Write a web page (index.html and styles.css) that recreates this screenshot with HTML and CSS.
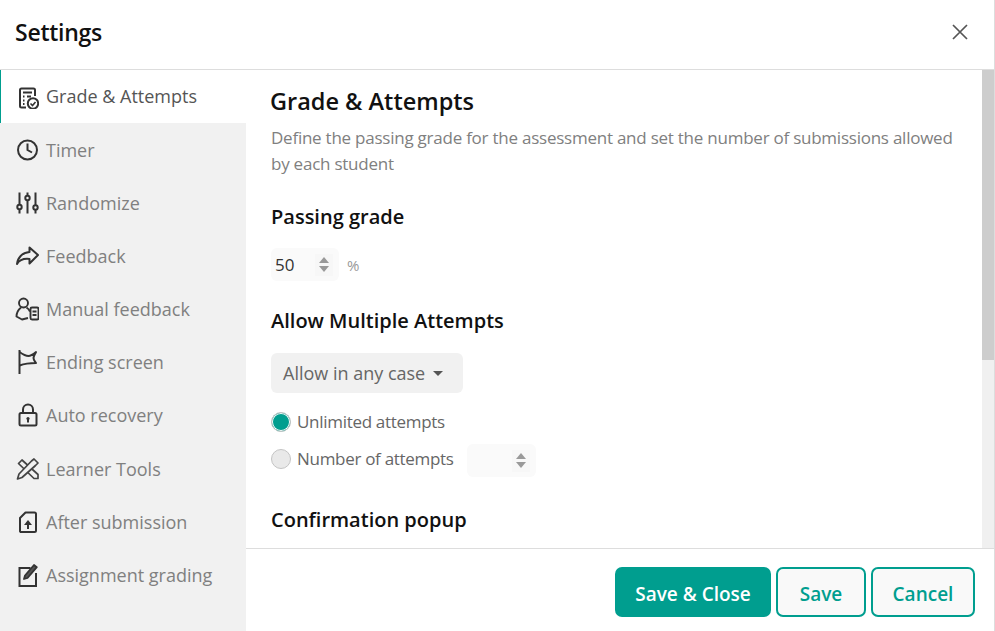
FILE: index.html
```html
<!DOCTYPE html>
<html lang="en">

<head>
    <meta charset="UTF-8" />
    <title>Settings</title>
    <link rel="stylesheet" href="styles.css">
</head>

<body>
    <div class="dialog">
        <header class="dialog-header">
            <h1>Settings</h1>
            <button class="close-btn" aria-label="Close">
                <svg width="16" height="16" viewBox="0 0 16 16"><path d="M1 1l14 14M15 1L1 15" stroke="#555" stroke-width="1.7" fill="none" /></svg>
            </button>
        </header>

        <div class="dialog-body">
            <nav class="side-nav">
                <a class="nav-item active">
                    <svg class="nav-icon" viewBox="0 0 24 24" fill="none" stroke="#333" stroke-width="2">
                        <path d="M11 22.500H6.500A1.500 1.500 0 0 1 5 21V5A1.500 1.500 0 0 1 6.500 3.500h12A1.500 1.500 0 0 1 20 5v6" />
                        <path d="M8 7.500h9M8 11.500h1.500M12 11.500h4M8 15.500h1.500M8 19h1.500" stroke-width="1.800" />
                        <circle cx="18" cy="18.500" r="5.200" fill="#fff" />
                        <path d="M15.500 18.500l2 2 3-3.500" stroke-width="1.600" />
                    </svg>
                    <span>Grade &amp; Attempts</span>
                </a>
                <a class="nav-item">
                    <svg class="nav-icon" viewBox="0 0 24 24" fill="none" stroke="#333" stroke-width="2">
                        <circle cx="12.500" cy="12" r="9.500" />
                        <path d="M12.500 5.500V12l4.500 2.500" />
                    </svg>
                    <span>Timer</span>
                </a>
                <a class="nav-item">
                    <svg class="nav-icon" viewBox="0 0 24 24" fill="none" stroke="#333" stroke-width="2">
                        <path d="M4.500 1.500v12M4.500 18.500v4M12.500 1.500v3M12.500 9.500v13M20.500 1.500v12.500M20.500 19v3.500" />
                        <circle cx="4.500" cy="16" r="2.200" />
                        <circle cx="12.500" cy="7" r="2.200" />
                        <circle cx="20.500" cy="16.500" r="2.200" />
                    </svg>
                    <span>Randomize</span>
                </a>
                <a class="nav-item">
                    <svg class="nav-icon" viewBox="0 0 24 24" fill="none" stroke="#333" stroke-width="2" stroke-linejoin="round">
                        <path d="M14.500 3.500L23 11l-8.500 8.500v-4.500C10 14.500 5 15 2 20c.5-6 5-11.500 12.500-12z" />
                    </svg>
                    <span>Feedback</span>
                </a>
                <a class="nav-item">
                    <svg class="nav-icon" viewBox="0 0 24 24" fill="none" stroke="#333" stroke-width="1.900" stroke-linejoin="round">
                        <circle cx="8.500" cy="6" r="4.500" />
                        <path d="M6 10.500C3 13 1.500 16 1.500 19.500L7 22.500l6-1.500" />
                        <path d="M11.500 10.500c1.500 1 2.800 2.500 3.500 4" />
                        <rect x="15.500" y="10.500" width="8" height="12" rx="1.500" />
                        <path d="M17.500 14.500h4M17.500 18h4" />
                    </svg>
                    <span>Manual feedback</span>
                </a>
                <a class="nav-item">
                    <svg class="nav-icon" viewBox="0 0 24 24" fill="none" stroke="#333" stroke-width="2">
                        <path d="M4.500 0v24" />
                        <path d="M4.500 2c3.500 2.500 6.500 4 9 4s5-2 7.500-4c-1 2-2.500 4-2.500 6s1.500 3.500 2.500 5c-5.500 0-11 .5-16.500 2.500" stroke-linejoin="round" />
                    </svg>
                    <span>Ending screen</span>
                </a>
                <a class="nav-item">
                    <svg class="nav-icon" viewBox="0 0 24 24" fill="none" stroke="#333" stroke-width="2">
                        <rect x="4.500" y="10" width="17" height="12.500" rx="1.500" />
                        <path d="M8 10V6.500a5 5 0 0 1 10 0V10" />
                        <path d="M13 16v3.500" />
                        <circle cx="13" cy="15.500" r="1.600" fill="#333" stroke="none" />
                    </svg>
                    <span>Auto recovery</span>
                </a>
                <a class="nav-item">
                    <svg class="nav-icon" viewBox="0 0 24 24" fill="none" stroke="#444" stroke-width="1.700" stroke-linejoin="round">
                        <path d="M3.500 6.500L7 3l16 14.500V21.500h-4z" />
                        <path d="M16.500 4l2.500-2 4 4-2.500 2.500L7 20.500 2.500 22l1.500-5z" fill="#f1f1f1" />
                    </svg>
                    <span>Learner Tools</span>
                </a>
                <a class="nav-item">
                    <svg class="nav-icon" viewBox="0 0 24 24" fill="none" stroke="#333" stroke-width="2" stroke-linejoin="round">
                        <path d="M10.500 2.500h9A1.500 1.500 0 0 1 21 4v16.500a1.500 1.500 0 0 1-1.500 1.500h-14A1.500 1.500 0 0 1 5 20.500V8z" />
                        <path d="M13 19v-5" />
                        <path d="M9 15l4-5 4 5z" fill="#333" stroke="none" />
                    </svg>
                    <span>After submission</span>
                </a>
                <a class="nav-item">
                    <svg class="nav-icon" viewBox="0 0 24 24" fill="none" stroke="#333" stroke-width="2">
                        <path d="M15.500 5H4.500v18h16.500V10" />
                        <path d="M9 16l1-3.500L19 2l2.800 2.200-9.300 10.800z" stroke-width="1.800" stroke-linejoin="round" fill="#555" />
                    </svg>
                    <span>Assignment grading</span>
                </a>
            </nav>

            <div class="main-pane">
                <div class="pane-row">
                    <section class="content">
                        <h2>Grade &amp; Attempts</h2>
                        <p class="lead">Define the passing grade for the assessment and set the number of submissions allowed by each student</p>

                        <h3 class="first">Passing grade</h3>
                        <div class="grade-row">
                            <div class="spin-input">
                                <span class="spin-value">50</span>
                                <span class="spin-arrows"><i class="up"></i><i class="down"></i></span>
                            </div>
                            <span class="unit">%</span>
                        </div>

                        <h3>Allow Multiple Attempts</h3>
                        <button class="select-btn">Allow in any case <i class="caret"></i></button>

                        <label class="radio-row">
                            <span class="radio checked"></span>
                            Unlimited attempts
                        </label>
                        <label class="radio-row second">
                            <span class="radio"></span>
                            Number of attempts
                            <div class="spin-input blank">
                                <span class="spin-value"></span>
                                <span class="spin-arrows"><i class="up"></i><i class="down"></i></span>
                            </div>
                        </label>

                        <h3 class="popup-title">Confirmation popup</h3>
                    </section>
                    <div class="scroll-track"><div class="scroll-thumb"></div></div>
                </div>

                <footer class="dialog-footer">
                    <button class="btn primary">Save &amp; Close</button>
                    <button class="btn outline save">Save</button>
                    <button class="btn outline cancel">Cancel</button>
                </footer>
            </div>
        </div>
    </div>
</body>

</html>
```

FILE: styles.css
```css
* {
    box-sizing: border-box;
}

html,
body {
    height: 100%;
}

body {
    margin: 0;
    font-family: "Open Sans", "Noto Sans", Arial, sans-serif;
    background-color: #ffffff;
    overflow: hidden;
}

.dialog {
    height: 631px;
    display: flex;
    flex-direction: column;
    border-right: 1px solid #dddddd;
}

.dialog-header {
    height: 70px;
    flex: none;
    display: flex;
    align-items: center;
    justify-content: space-between;
    padding: 0 26px 5px 15px;
    border-bottom: 1px solid #dddddd;
}

.dialog-header h1 {
    margin: 0;
    font-size: 23px;
    font-weight: 600;
    letter-spacing: -0.25px;
    color: #111111;
}

.close-btn {
    border: none;
    background: none;
    padding: 0;
    display: flex;
}

.dialog-body {
    flex: 1;
    display: flex;
    min-height: 0;
}

/* Side menu */
.side-nav {
    width: 246px;
    flex: none;
    background-color: #f1f1f1;
}

.nav-item {
    height: 53.15px;
    display: flex;
    align-items: center;
    padding-left: 15px;
    font-size: 18px;
    color: #808080;
}

.nav-item.active {
    background-color: #ffffff;
    border-left: 1px solid #009e8f;
    padding-left: 14px;
    color: #555555;
}

.nav-item.active span {
    margin-top: -1px;
}

.nav-icon {
    width: 24px;
    height: 24px;
    margin-right: 7px;
    flex: none;
}

/* Main area */
.main-pane {
    flex: 1;
    min-width: 0;
    display: flex;
    flex-direction: column;
}

.pane-row {
    flex: 1;
    min-height: 0;
    display: flex;
}

.content {
    flex: 1;
    min-width: 0;
    padding: 15px 25px 0;
    overflow: hidden;
}

.content h2 {
    margin: 0 0 0 -1px;
    font-size: 23.5px;
    line-height: 32px;
    font-weight: 600;
    color: #111111;
}

.lead {
    margin: 8px 0 0;
    font-size: 17px;
    line-height: 26px;
    letter-spacing: -0.24px;
    color: #808080;
}

.content h3 {
    margin: 27px 0 0;
    font-size: 20px;
    line-height: 26px;
    font-weight: 600;
    color: #111111;
}

.grade-row {
    display: flex;
    align-items: center;
    margin-top: 18px;
}

.spin-input {
    width: 68px;
    height: 33px;
    display: flex;
    align-items: center;
    justify-content: space-between;
    padding: 0 6px 0 4px;
    background-color: #fafafa;
    border-radius: 6px;
    font-size: 17px;
    color: #333333;
}

.spin-arrows {
    width: 18px;
    height: 22px;
    display: flex;
    flex-direction: column;
    align-items: center;
    justify-content: center;
    gap: 3px;
    background-color: #f7f7f7;
}

.spin-arrows i {
    width: 0;
    height: 0;
    border-left: 5.5px solid transparent;
    border-right: 5.5px solid transparent;
}

.spin-arrows .up {
    border-bottom: 6px solid #999999;
}

.spin-arrows .down {
    border-top: 6px solid #999999;
}

.unit {
    margin-left: 8px;
    font-size: 15px;
    color: #999999;
}

.select-btn {
    display: flex;
    align-items: center;
    height: 40px;
    margin-top: 19px;
    padding: 0 20px 0 12px;
    border: none;
    border-radius: 6px;
    background-color: #f1f1f1;
    font-family: inherit;
    font-size: 18px;
    color: #666666;
}

.caret {
    margin-left: 8px;
    width: 0;
    height: 0;
    border-left: 5px solid transparent;
    border-right: 5px solid transparent;
    border-top: 5px solid #555555;
}

.radio-row {
    display: flex;
    align-items: center;
    height: 33px;
    margin-top: 12px;
    font-size: 17px;
    letter-spacing: -0.3px;
    color: #666666;
}

.radio-row.second {
    margin-top: 4px;
}

.radio {
    width: 20px;
    height: 20px;
    margin-right: 6px;
    border-radius: 50%;
    border: 1px solid #c4c4c4;
    background-color: #e9e9e9;
}

.radio.checked {
    background-color: #009e8f;
    box-shadow: inset 0 0 0 1px #ffffff;
}

.spin-input.blank {
    width: 69px;
    margin: 4px 0 0 13px;
}

.popup-title.popup-title {
    margin-top: 32px;
}

/* Scrollbar */
.scroll-track {
    width: 12px;
    flex: none;
    background-color: #f0f0f0;
}

.scroll-thumb {
    height: 290px;
    background-color: #cdcdcd;
}

/* Footer */
.dialog-footer {
    height: 83px;
    flex: none;
    display: flex;
    justify-content: flex-end;
    gap: 5px;
    padding: 18px 19px 0 0;
    border-top: 1px solid #dddddd;
}

.btn {
    height: 50px;
    padding: 3px 0 0;
    border-radius: 7px;
    font-family: inherit;
    font-size: 19px;
    font-weight: 600;
}

.btn.primary {
    width: 156px;
    border: none;
    background-color: #009e8f;
    color: #ffffff;
}

.btn.outline {
    border: 2px solid #009e8f;
    background-color: #f9f9f9;
    color: #009e8f;
}

.btn.save {
    width: 90px;
}

.btn.cancel {
    width: 104px;
}
```
